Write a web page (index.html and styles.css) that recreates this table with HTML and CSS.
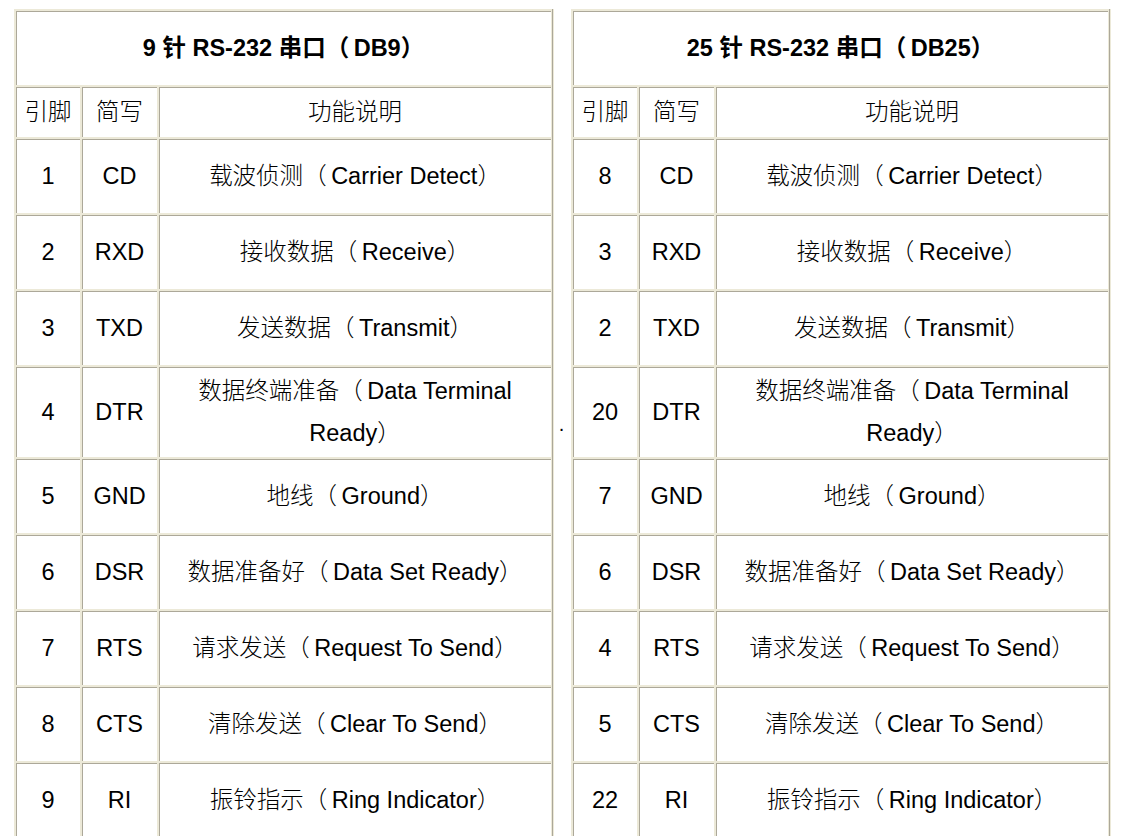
FILE: index.html
```html
<!DOCTYPE html>
<html lang="zh-CN">
<head>
<meta charset="utf-8">
<title>RS-232 串口引脚定义</title>
<link rel="stylesheet" href="styles.css">
</head>
<body>
<div class="page">
<table class="outer">
<tr>
<td class="side">
<table class="pins">
<colgroup><col class="c1"><col class="c2"><col class="c3"></colgroup>
<tr class="title"><td colspan="3">9 针 RS-232 串口<span class="lp">（</span>DB9）</td></tr>
<tr class="head"><td>引脚</td><td>简写</td><td>功能说明</td></tr>
<tr class="row"><td>1</td><td>CD</td><td>载波侦测<span class="lp">（</span>Carrier Detect）</td></tr>
<tr class="row"><td>2</td><td>RXD</td><td>接收数据<span class="lp">（</span>Receive）</td></tr>
<tr class="row"><td>3</td><td>TXD</td><td>发送数据<span class="lp">（</span>Transmit）</td></tr>
<tr class="row"><td>4</td><td>DTR</td><td>数据终端准备<span class="lp">（</span>Data Terminal<br>Ready）</td></tr>
<tr class="row"><td>5</td><td>GND</td><td>地线<span class="lp">（</span>Ground）</td></tr>
<tr class="row"><td>6</td><td>DSR</td><td>数据准备好<span class="lp">（</span>Data Set Ready）</td></tr>
<tr class="row"><td>7</td><td>RTS</td><td>请求发送<span class="lp">（</span>Request To Send）</td></tr>
<tr class="row"><td>8</td><td>CTS</td><td>清除发送<span class="lp">（</span>Clear To Send）</td></tr>
<tr class="row"><td>9</td><td>RI</td><td>振铃指示<span class="lp">（</span>Ring Indicator）</td></tr>
</table>
</td>
<td class="mid">.</td>
<td class="side">
<table class="pins">
<colgroup><col class="c1"><col class="c2"><col class="c3"></colgroup>
<tr class="title"><td colspan="3">25 针 RS-232 串口<span class="lp">（</span>DB25）</td></tr>
<tr class="head"><td>引脚</td><td>简写</td><td>功能说明</td></tr>
<tr class="row"><td>8</td><td>CD</td><td>载波侦测<span class="lp">（</span>Carrier Detect）</td></tr>
<tr class="row"><td>3</td><td>RXD</td><td>接收数据<span class="lp">（</span>Receive）</td></tr>
<tr class="row"><td>2</td><td>TXD</td><td>发送数据<span class="lp">（</span>Transmit）</td></tr>
<tr class="row"><td>20</td><td>DTR</td><td>数据终端准备<span class="lp">（</span>Data Terminal<br>Ready）</td></tr>
<tr class="row"><td>7</td><td>GND</td><td>地线<span class="lp">（</span>Ground）</td></tr>
<tr class="row"><td>6</td><td>DSR</td><td>数据准备好<span class="lp">（</span>Data Set Ready）</td></tr>
<tr class="row"><td>4</td><td>RTS</td><td>请求发送<span class="lp">（</span>Request To Send）</td></tr>
<tr class="row"><td>5</td><td>CTS</td><td>清除发送<span class="lp">（</span>Clear To Send）</td></tr>
<tr class="row"><td>22</td><td>RI</td><td>振铃指示<span class="lp">（</span>Ring Indicator）</td></tr>
</table>
</td>
</tr>
</table>
</div>
</body>
</html>
```
FILE: styles.css
```css
html, body {
  margin: 0;
  padding: 0;
  background: #ffffff;
}

body {
  font-family: "Liberation Sans", "Noto Sans CJK SC", sans-serif;
  font-size: 23.5px;
  color: #000000;
}

.page {
  padding: 9px 0 0 14px;
}

.outer {
  border-collapse: separate;
  border-spacing: 0;
}

.outer > tbody > tr > td {
  padding: 0;
  vertical-align: top;
}

.outer > tbody > tr > td.mid {
  width: 19px;
  padding-top: 2px;
  text-align: center;
  vertical-align: middle;
  font-size: 20px;
  line-height: 20px;
}

.pins {
  border-collapse: separate;
  border-spacing: 0;
  table-layout: fixed;
  width: 538px;
  border-right: 1px solid #ece9d8;
  box-shadow: 1px 0 0 #aca899, 2px 0 0 #ece9d8;
}

.pins col.c1 { width: 66px; }
.pins col.c2 { width: 77px; }
.pins col.c3 { width: 394px; }

.pins td {
  box-sizing: border-box;
  border-top: 2px solid #ece9d8;
  border-left: 2px solid #ece9d8;
  box-shadow: inset 1px 1px 0 #aca899;
  padding: 3px 2px;
  text-align: center;
  vertical-align: middle;
  line-height: 42px;
  white-space: nowrap;
  font-weight: 300;
}

.pins .lp {
  padding-right: 4.5px;
}

.pins tr.title td {
  height: 76px;
  font-weight: bold;
}

.pins tr.head td {
  height: 52px;
}

.pins tr.row td {
  height: 76px;
}
```
